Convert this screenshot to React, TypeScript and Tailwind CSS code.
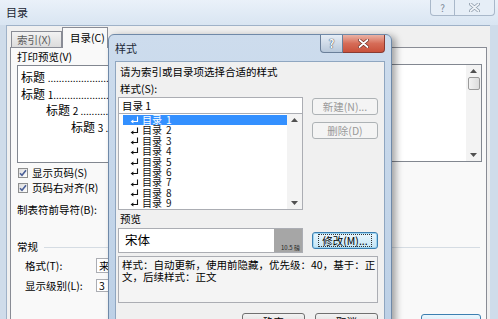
import React from 'react';

function Tri({ up }: { up?: boolean }) {
  return (
    <svg width="7" height="4" viewBox="0 0 7 4" className="block">
      <path d={up ? 'M0 4 L3.5 0 L7 4 Z' : 'M0 0 L7 0 L3.5 4 Z'} fill="#505050" />
    </svg>
  );
}

function ReturnMark() {
  return (
    <svg width="9" height="8" viewBox="0 0 9 8" className="block shrink-0">
      <path d="M7.5 0.5 V5.5 H2.5" fill="none" stroke="currentColor" strokeWidth="1.1" />
      <path d="M0.6 5.5 L3.4 3.4 L3.4 7.6 Z" fill="currentColor" />
    </svg>
  );
}

function CheckBox() {
  return (
    <span className="flex h-[10px] w-[10px] shrink-0 items-center justify-center border border-[#8e8f8f] bg-gradient-to-br from-[#dcdcdc] to-white">
      <svg width="8" height="8" viewBox="0 0 8 8">
        <path d="M1 4.2 L3 6.3 L7 1.3" fill="none" stroke="#4a5f97" strokeWidth="1.6" />
      </svg>
    </span>
  );
}

function CloseGlyph({ color, stroke }: { color: string; stroke: string }) {
  return (
    <svg width="11" height="9" viewBox="0 0 11 9">
      <path d="M1.5 1 L9.5 8 M9.5 1 L1.5 8" stroke={stroke} strokeWidth="3.2" strokeLinecap="round" />
      <path d="M1.5 1 L9.5 8 M9.5 1 L1.5 8" stroke={color} strokeWidth="1.8" strokeLinecap="round" />
    </svg>
  );
}

function Scrollbar({ thumb }: { thumb?: boolean }) {
  return (
    <div className="flex w-[15px] shrink-0 flex-col items-center justify-between bg-[#f3f3f3] py-[4px]">
      <div className="flex flex-col items-center gap-[4px]">
        <Tri up />
        {thumb && <div className="h-[13px] w-[12px] rounded-[2px] border border-[#9a9a9a] bg-gradient-to-r from-[#f2f2f2] to-[#dcdcdc]" />}
      </div>
      <Tri />
    </div>
  );
}

const styleItems = ['1', '2', '3', '4', '5', '6', '7', '8', '9'];

function StyleDialog() {
  return (
    <div className="absolute left-[108px] top-[34px] flex h-[300px] w-[284px] flex-col rounded-t-[6px] border border-[#6f89a8] bg-gradient-to-b from-[#cddced] to-[#bcd0e6] shadow-[4px_2px_7px_rgba(0,0,0,0.35)]">
      <div className="flex h-[26px] items-start justify-between pl-[6px] pr-[6px]">
        <span className="self-center text-[11px] leading-none text-[#1e2a38]">样式</span>
        <div className="flex">
          <div className="flex h-[18px] w-[23px] items-center justify-center rounded-bl-[4px] border border-t-0 border-[#6a7f99] bg-gradient-to-b from-[#e6edf5] to-[#b8c8da] text-[11px] font-bold leading-none text-[#f7f9fb] [text-shadow:0_0_1px_#2d3d52,0_0_1px_#2d3d52]">
            ?
          </div>
          <div className="flex h-[18px] w-[42px] items-center justify-center rounded-br-[4px] border border-l-0 border-t-0 border-[#8a3b32] bg-gradient-to-b from-[#eab2a5] via-[#d66c57] to-[#c9513b]">
            <CloseGlyph color="#ffffff" stroke="#6b2a22" />
          </div>
        </div>
      </div>
      <div className="mx-[6px] flex flex-1 flex-col border border-[#8fa6c0] bg-[#f0f0f0] pl-[2px] pr-[6px] pt-[3px]">
        <div className="h-[14px] pl-[2px] leading-[14px]">请为索引或目录项选择合适的样式</div>
        <div className="mt-[3px] h-[14px] pl-[2px] leading-[14px]">样式(S):</div>
        <div className="mt-[1px] flex gap-[9px]">
          <div className="flex w-[185px] flex-col">
            <div className="flex h-[17px] items-center border border-[#abadb3] bg-white pl-[3px]">目录 1</div>
            <div className="-mt-px flex h-[97px] border border-[#abadb3] bg-white">
              <div className="flex flex-1 flex-col pl-[4px] pt-[1px] text-[10px] leading-[10.4px]">
                {styleItems.map((n) => (
                  <div
                    key={n}
                    className={
                      n === '1'
                        ? 'flex h-[10.4px] items-center gap-[3px] bg-[#3390ff] pl-[7px] text-white'
                        : 'flex h-[10.4px] items-center gap-[3px] pl-[7px] text-[#111]'
                    }
                  >
                    <ReturnMark />
                    <span>目录</span>
                    <span className="pl-[1px]">{n}</span>
                  </div>
                ))}
              </div>
              <Scrollbar />
            </div>
          </div>
          <div className="flex w-[66px] flex-col gap-[7px] pt-[1px]">
            <div className="flex h-[17px] items-center justify-center rounded-[3px] border border-[#adb2b5] bg-[#f4f4f4] text-[#9a9a9a]">新建(N)...</div>
            <div className="flex h-[17px] items-center justify-center rounded-[3px] border border-[#adb2b5] bg-[#f4f4f4] text-[#9a9a9a]">删除(D)</div>
          </div>
        </div>
        <div className="mt-[2px] h-[14px] pl-[2px] leading-[14px]">预览</div>
        <div className="mt-[2px] flex items-center gap-[9px]">
          <div className="flex h-[25px] w-[185px] border border-[#abadb3] bg-white">
            <div className="flex flex-1 items-center pl-[6px] text-[12.5px]">宋体</div>
            <div className="flex w-[28px] items-end justify-end bg-[#a6a6a6] pb-[1px] pr-[2px] text-[6px] leading-none text-[#222]">10.5 磅</div>
          </div>
          <div className="flex h-[17px] w-[66px] items-center justify-center rounded-[3px] border border-[#3c7fb1] bg-gradient-to-b from-[#eaf6fd] to-[#c4e5f6] shadow-[inset_0_0_0_1px_#9fd5f2]">
            <span className="border border-dotted border-[#333] px-[3px] leading-[11px]">修改(M)...</span>
          </div>
        </div>
        <div className="mt-[3px] h-[47px] border border-[#abadb3] bg-[#f4f4f4] pl-[3px] pt-[2px] leading-[12px]">
          <div>样式：自动更新，使用前隐藏，优先级：40，基于：正</div>
          <div>文，后续样式：正文</div>
        </div>
        <div className="mt-[10px] flex justify-end gap-[10px]">
          <div className="flex h-[17px] w-[63px] items-center justify-center rounded-[3px] border border-[#707070] bg-gradient-to-b from-[#f2f2f2] to-[#d6d6d6]">确定</div>
          <div className="flex h-[17px] w-[63px] items-center justify-center rounded-[3px] border border-[#707070] bg-gradient-to-b from-[#f2f2f2] to-[#d6d6d6]">取消</div>
        </div>
      </div>
    </div>
  );
}

export default function App() {
  return (
    <div className="relative h-[319px] w-[498px] overflow-hidden bg-[#cfdcea] font-['Noto_Sans_CJK_SC','Noto_Sans',sans-serif] text-[10.5px] text-black">
      <div className="flex h-full flex-col">
        <div className="flex h-[25px] shrink-0 items-start justify-between bg-gradient-to-b from-[#eaf1f9] to-[#d9e5f2]">
          <span className="self-center pl-[6px] text-[11px] leading-none text-[#1b2633]">目录</span>
          <div className="flex pr-[3px]">
            <div className="flex h-[16px] w-[25px] items-center justify-center rounded-bl-[4px] border border-t-0 border-[#a9b8ca] bg-[#e6eef7] text-[10px] leading-none text-[#7d8997]">?</div>
            <div className="flex h-[16px] w-[40px] items-center justify-center rounded-br-[4px] border border-l-0 border-t-0 border-[#a9b8ca] bg-[#e6eef7]">
              <CloseGlyph color="#eef2f7" stroke="#8896a6" />
            </div>
          </div>
        </div>
        <div className="flex min-h-0 flex-1 pl-[6px] pr-[8px]">
          <div className="flex flex-1 flex-col border-l border-t border-[#9fb2c8] bg-[#f0f0f0]">
            <div className="flex h-[21px] shrink-0 items-end pl-[4px]">
              <div className="flex h-[16px] w-[51px] items-center border border-b-0 border-[#898c95] bg-gradient-to-b from-[#f2f2f2] to-[#dcdcdc] pl-[5px] text-[#5c5c5c]">索引(X)</div>
              <div className="relative z-10 -mb-px flex h-[21px] w-[46px] items-center border border-b-0 border-[#898c95] bg-[#f9f9f9] pl-[7px]">目录(C)</div>
            </div>
            <div className="mx-[3px] flex flex-1 flex-col border border-[#898c95] bg-[#f9f9f9] pl-[6px]">
              <div className="h-[17px] leading-[17px]">打印预览(V)</div>
              <div className="flex gap-[16px]">
                <div className="h-[98px] w-[219px] overflow-hidden whitespace-nowrap border border-[#828790] bg-white pl-[3px] pt-[3px] text-[12px] leading-[15.5px]">
                  <div>标题 <span className="text-[10px]">..............................</span></div>
                  <div>标题 <span className="text-[10px]">1..............................</span></div>
                  <div className="pl-[25px]">标题 <span className="text-[10px]">2 ..............................</span></div>
                  <div className="pl-[50px]">标题 <span className="text-[10px]">3 ..............................</span></div>
                </div>
                <div className="-mt-px flex h-[98px] w-[230px] border border-[#828790] bg-white">
                  <div className="flex-1" />
                  <Scrollbar thumb />
                </div>
              </div>
              <div className="mt-[2px] flex h-[15px] items-center gap-[4px] pl-[1px]">
                <CheckBox />
                <span>显示页码(S)</span>
              </div>
              <div className="flex h-[15px] items-center gap-[4px] pl-[1px]">
                <CheckBox />
                <span>页码右对齐(R)</span>
              </div>
              <div className="mt-[7px] h-[15px] leading-[15px]">制表符前导符(B):</div>
              <div className="mt-[22px] flex h-[16px] items-center gap-[6px] pr-[6px]">
                <span>常规</span>
                <div className="h-px flex-1 bg-[#d5dce3]" />
              </div>
              <div className="mt-[3px] flex h-[15px] items-center pl-[8px]">
                <span className="w-[71px]">格式(T):</span>
                <div className="flex h-[15px] w-[120px] items-center border border-[#abadb3] bg-white pl-[2px]">来自模板</div>
              </div>
              <div className="mt-[5px] flex h-[15px] items-center pl-[8px]">
                <span className="w-[71px]">显示级别(L):</span>
                <div className="flex h-[13px] w-[40px] items-center border border-[#abadb3] bg-white pl-[2px]">3</div>
              </div>
              <div className="mt-[21px] flex justify-end pr-[5px]">
                <div className="h-[18px] w-[60px] rounded-[3px] border border-[#3c7fb1] bg-gradient-to-b from-[#eaf6fd] to-[#c4e5f6]" />
              </div>
            </div>
          </div>
        </div>
      </div>
      <StyleDialog />
    </div>
  );
}
